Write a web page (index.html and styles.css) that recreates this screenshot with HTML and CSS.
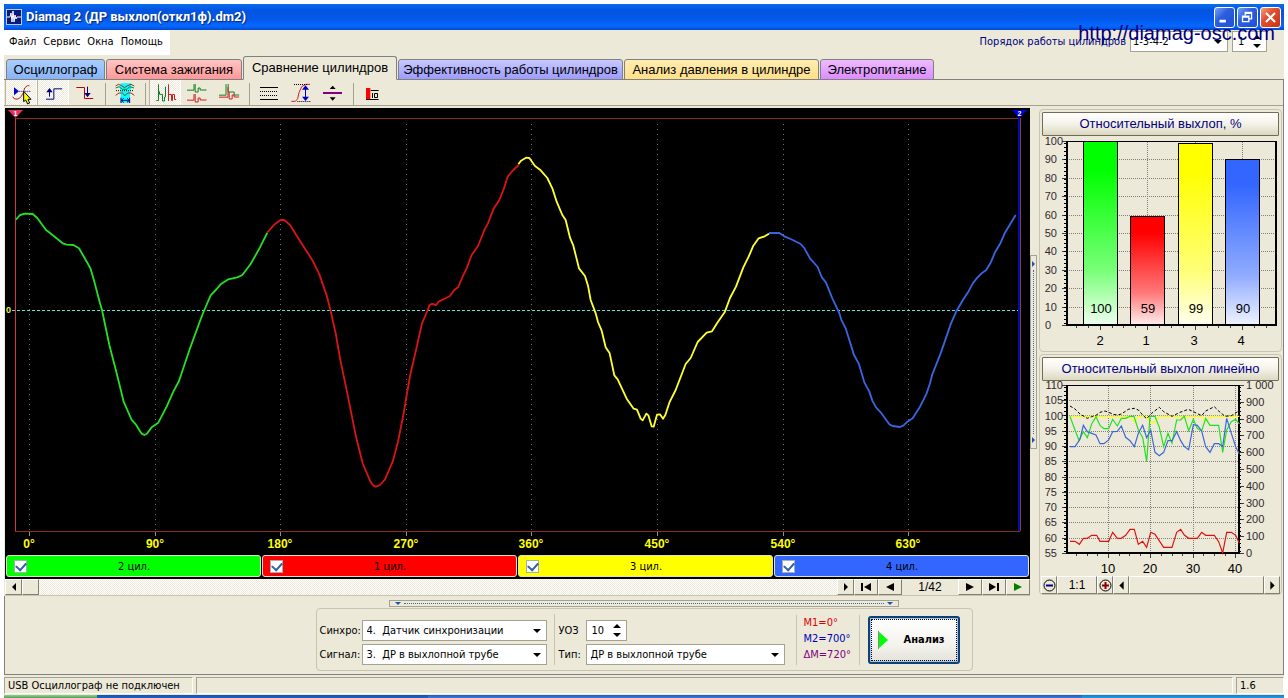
FILE: index.html
```
<!DOCTYPE html>
<html lang="ru">
<head>
<meta charset="utf-8">
<title>Diamag 2</title>
<link rel="stylesheet" href="styles.css">
</head>
<body>
<div class="app">
  <header class="titlebar">
    <svg class="logo" viewBox="0 0 16 16" aria-hidden="true"><rect width="16" height="16" fill="#b8c8f0"/><rect x="1" y="1" width="14" height="14" fill="#0a1a78"/><path d="M1 8h3l1-4 1 9 1-11 1 11 1-7 1 4 1-2h4" fill="none" stroke="#fff"/></svg>
    <h1 class="title">Diamag 2 (ДР выхлоп(откл1ф).dm2)</h1>
    <div class="winbtns">
      <button class="winbtn" aria-label="Свернуть"><svg viewBox="0 0 21 21"><path d="M5 14.500h7" stroke="#fff" stroke-width="3"/></svg></button>
      <button class="winbtn" aria-label="Восстановить"><svg viewBox="0 0 21 21"><path d="M8 8V5h7v7h-3M8 6h7M5 9h7v6H5zM5 10h7" fill="none" stroke="#fff" stroke-width="1.500"/></svg></button>
      <button class="winbtn close" aria-label="Закрыть"><svg viewBox="0 0 21 21"><path d="M5.500 5.500l10 10M15.500 5.500l-10 10" stroke="#fff" stroke-width="2.300"/></svg></button>
    </div>
  </header>

  <div class="menurow">
    <nav class="menu"><a href="#">Файл</a><a href="#">Сервис</a><a href="#">Окна</a><a href="#">Помощь</a></nav>
    <div class="order">
      <label for="order">Порядок работы цилиндров</label>
      <span class="combo order-combo"><select id="order"><option>1-3-4-2</option></select></span>
      <span class="spin order-spin"><input type="text" value="1" aria-label="Первый цилиндр"><svg viewBox="0 0 8 13"><path d="M0 4l4-4 4 4zM0 9l4 4 4-4z"/></svg></span>
    </div>
    <div class="watermark">http://diamag-osc.com</div>
  </div>

  <div class="tabs">
    <button class="tab osc">Осциллограф</button>
    <button class="tab ign">Система зажигания</button>
    <button class="tab cmp">Сравнение цилиндров</button>
    <button class="tab eff">Эффективность работы цилиндров</button>
    <button class="tab prs">Анализ давления в цилиндре</button>
    <button class="tab pwr">Электропитание</button>
  </div>

  <div class="toolbar">
    <button class="tool on" aria-label="Курсор"><svg viewBox="15 240 96 75"><path d="M42 262l15 12-15 12z" fill="#0000d0"/><path d="M58 274h36" stroke="#000080" stroke-width="3" stroke-dasharray="3 3"/><path d="M38 290l6 7h10l8-5 8-14 4-14 8-7h6" fill="none" stroke="#c02020" stroke-width="3"/><path d="M71 274v31l6-5 6 12 6-3-5-11h9z" fill="#ff0" stroke="#000" stroke-width="3"/></svg></button>
    <button class="tool on" aria-label="Передний фронт"><svg viewBox="111 240 96 75"><path d="M138 297.500h23.500v-31h25M148.500 290v-20" fill="none" stroke="#000080" stroke-width="3"/><path d="M139 277l9.500-13 9.500 13z" fill="#000080"/></svg></button>
    <button class="tool" aria-label="Задний фронт"><svg viewBox="207 240 96 75"><path d="M229 262.500h24.500v33h26" fill="none" stroke="#c00000" stroke-width="3"/><path d="M262.500 260v25" stroke="#000080" stroke-width="3"/><path d="M253 279l9.500 13 9.500-13z" fill="#000080"/></svg></button>
    <span class="sep"></span>
    <button class="tool" aria-label="Окно"><svg viewBox="327 240 96 75"><path d="M362 250h32v14l-4 14v30h-28v-30l-2-14z" fill="#0ff"/><path d="M347 258l8-5 10 4 8 6 10-6 10-4 10 5M347 286l10-7h10l8 8 8-8h10l10 7" fill="none" stroke="#a03020" stroke-width="3"/><path d="M347 264l10-4 10 8h14l8-8 13 4" fill="none" stroke="#008040" stroke-width="3"/><path d="M348 272h52" stroke="#000" stroke-width="3" stroke-dasharray="3 3"/><path d="M364 301h24M363 293v16M389 293v16M371 295l-7 6 7 6M381 295l7 6-7 6" fill="none" stroke="#000080" stroke-width="3"/></svg></button>
    <span class="sep"></span>
    <button class="tool on" aria-label="Рядом"><svg viewBox="447 240 96 75"><g fill="none" stroke-width="3"><path d="M469 301.500h6.500V253M478.500 274v9h9v20h6v-12h3v-31" stroke="#108020"/><path d="M505.500 253v50M505.500 283.500h9v18h3v-18h6v15h5" stroke="#d02020"/></g></svg></button>
    <button class="tool" aria-label="Друг под другом"><svg viewBox="543 240 96 75"><g fill="none" stroke-width="3"><path d="M561 270.500h21v-18M585.500 252v24h9v-12h6v6h19" stroke="#108020"/><path d="M561 300.500h21v-18M585.500 282v24h9v-12h6v6h19" stroke="#d02020"/></g></svg></button>
    <button class="tool" aria-label="Наложение"><svg viewBox="639 240 96 75"><g fill="none" stroke-width="3"><path d="M657 285.500h21v-33M684.500 252v24h18v9h15" stroke="#108020"/><path d="M657 291.500h27v-30M687.500 276v21h9v-12h6v6h15" stroke="#d02020"/></g></svg></button>
    <span class="sep"></span>
    <button class="tool" aria-label="Уровни"><svg viewBox="759 240 96 75"><path d="M780 262.500h54M780 298.500h54" stroke="#000" stroke-width="3"/><path d="M780 274.500h54M780 286.500h54" stroke="#000" stroke-width="3" stroke-dasharray="3 3"/></svg></button>
    <button class="tool" aria-label="Размах"><svg viewBox="855 240 96 75"><path d="M874 304h12l7-8 4-18 8-18 12-7h13" fill="none" stroke="#d02020" stroke-width="3"/><path d="M882 253.500h42M892 304.500h42" stroke="#000" stroke-width="3" stroke-dasharray="3 3"/><path d="M916.500 260v38" stroke="#0000d0" stroke-width="3"/><path d="M906 269l10.500-13 10.500 13zM906 290l10.500 13 10.500-13z" fill="#0000d0"/></svg></button>
    <button class="tool" aria-label="Центр"><svg viewBox="951 240 96 75"><path d="M969 279h57" stroke="#800080" stroke-width="6"/><path d="M989 267l9-10 9 10zM989 292l9 10 9-10z"/></svg></button>
    <span class="sep"></span>
    <button class="tool" aria-label="Диаграмма"><svg viewBox="1071 240 96 75"><path d="M1098 264h13v33h-13z" fill="#f00"/><path d="M1098 298.500h38M1112 271.500h24M1117.500 279v15M1123.500 280.500h9v12h-9z" fill="none" stroke="#000" stroke-width="3"/></svg></button>
  </div>

  <main class="main">
    <section class="left">
      <div class="scope">
        <svg class="wave" viewBox="5 108 1025 447" role="img" aria-label="Сравнение цилиндров">
          <path d="M29.500 124V531M155.500 124V531M280.500 124V531M406.500 124V531M531.500 124V531M657.500 124V531M783.500 124V531M908.500 124V531" stroke="#707070" stroke-dasharray="1 4"/>
          <path d="M15 118.500H1020M15 531.500H1020" stroke="#8a3018"/>
          <path d="M29.500 532v4M155.500 532v4M280.500 532v4M406.500 532v4M531.500 532v4M657.500 532v4M783.500 532v4M908.500 532v4" stroke="#909090"/>
          <path d="M15.500 118V531" stroke="#d03848"/>
          <path d="M1019 112V531" stroke="#0808b0" stroke-width="2"/><path d="M1020.500 118V531" stroke="#804048"/>
          <path d="M12 310.500H1018" stroke="#60e0e0" stroke-dasharray="3 2"/>
          <path d="M8 110h15l-7.500 8z" fill="#e83060"/><path d="M1012 110h15l-7.500 8z" fill="#0000e0"/>
          <g class="marks"><text x="15.500" y="116">1</text><text x="1019.500" y="116">2</text></g>
          <text class="zero" x="6" y="313">0</text>
          <g fill="none" stroke-width="5.500" stroke-linejoin="round">
            <g transform="translate(0 190) scale(.33333)"><polyline stroke="#22e022" points="48,89 60,75 75,71 98,72 112,84 138,120 150,129 190,161 200,164 220,165 237,175 262,218 272,237 283,275 300,340 306,360 328,465 350,550 371,635 395,690 408,704 425,731 433,735 440,732 455,712 475,698 500,650 520,605 537,573 570,475 600,393 613,360 632,316 650,297 662,283 685,268 712,262 727,255 752,222 780,172 802,128"/></g>
            <g transform="translate(250 140) scale(.33333)"><polyline stroke="#d81414" points="52,277 75,252 92,240 103,240 120,255 150,303 188,362 208,403 230,466 243,517 258,585 270,655 292,760 318,890 338,970 360,1022 370,1037 378,1040 390,1035 405,1018 428,965 443,910 460,825 480,708 500,622 516,550 532,513 538,496 546,491 558,496 566,485 600,468 612,451 624,442 640,405 650,385 665,345 684,318 704,268 714,250 730,208 748,180 762,145 773,110 790,90 806,75"/></g>
            <g transform="translate(510 140) scale(.33333)"><polyline stroke="#ffff30" points="25,73 33,62 48,53 58,54 75,78 90,89 112,114 127,145 140,185 157,225 167,240 180,293 190,317 207,385 225,408 234,437 242,480 257,520 264,546 275,572 287,622 299,640 313,706 323,718 350,776 371,806 381,809 392,836 398,841 409,821 415,826 425,859 431,860 441,824 450,823 459,836 466,825 478,788 497,750 527,672 542,654 563,606 590,578 606,574 624,545 644,517 660,474 678,440 700,382 716,350 730,317 746,295 764,289 777,281"/></g>
            <g transform="translate(740 190) scale(.33333)"><polyline stroke="#3866e0" points="87,129 118,129 135,140 152,147 182,162 192,173 210,205 233,231 245,261 258,278 277,325 297,367 305,392 317,415 342,495 356,520 373,577 388,605 397,632 408,652 422,667 448,703 458,708 480,711 490,707 500,697 518,685 540,650 560,610 570,580 577,553 602,490 633,400 650,362 670,328 685,305 700,278 712,263 726,249 738,241 752,218 766,185 782,158 795,128 827,75"/></g>
          </g>
          <g class="deg"><text x="29" y="548">0°</text><text x="155" y="548">90°</text><text x="280" y="548">180°</text><text x="406" y="548">270°</text><text x="531" y="548">360°</text><text x="657" y="548">450°</text><text x="783" y="548">540°</text><text x="908" y="548">630°</text></g>
        </svg>
        <div class="cyls">
          <label class="cyl c2"><input type="checkbox" checked><span>2 цил.</span></label>
          <label class="cyl c1"><input type="checkbox" checked><span>1 цил.</span></label>
          <label class="cyl c3"><input type="checkbox" checked><span>3 цил.</span></label>
          <label class="cyl c4"><input type="checkbox" checked><span>4 цил.</span></label>
        </div>
      </div>
      <div class="scroll">
        <button class="sbtn" aria-label="Влево"><svg viewBox="0 0 12 12"><path d="M8 2v8L4 6z"/></svg></button>
        <span class="thumb"></span><span class="track"></span>
        <button class="sbtn" aria-label="Вправо"><svg viewBox="0 0 12 12"><path d="M4 2v8l4-4z"/></svg></button>
        <button class="nav" aria-label="Первый"><svg viewBox="0 0 12 12"><path d="M1 2h2v8H1zM11 2v8L4 6z"/></svg></button>
        <button class="nav" aria-label="Предыдущий"><svg viewBox="0 0 12 12"><path d="M10 2v8L2 6z"/></svg></button>
        <output class="page">1/42</output>
        <button class="nav" aria-label="Следующий"><svg viewBox="0 0 12 12"><path d="M2 2v8l8-4z"/></svg></button>
        <button class="nav" aria-label="Последний"><svg viewBox="0 0 12 12"><path d="M9 2h2v8H9zM1 2v8l7-4z"/></svg></button>
        <button class="nav play" aria-label="Пуск"><svg viewBox="0 0 12 12"><path d="M2 2v8l8-4z"/></svg></button>
      </div>
    </section>

    <div class="vsplit"><button class="vgrip" aria-label="Свернуть панель"><i></i><b></b><i></i></button></div>

    <aside class="right">
      <section class="panel">
        <button class="head">Относительный выхлоп, %</button>
        <svg class="chart" viewBox="1040 136 241 215" role="img" aria-label="Относительный выхлоп, %">
          <defs>
            <linearGradient id="g2" x2="0" y2="1"><stop stop-color="#0f0"/><stop offset=".15" stop-color="#0f0"/><stop offset=".7" stop-color="#78ff78"/><stop offset="1" stop-color="#f0fff0"/></linearGradient>
            <linearGradient id="g1" x2="0" y2="1"><stop stop-color="#f00"/><stop offset=".15" stop-color="#f00"/><stop offset=".7" stop-color="#ff7878"/><stop offset="1" stop-color="#fff0f0"/></linearGradient>
            <linearGradient id="g3" x2="0" y2="1"><stop stop-color="#ff0"/><stop offset=".15" stop-color="#ff0"/><stop offset=".7" stop-color="#ffff78"/><stop offset="1" stop-color="#fffff0"/></linearGradient>
            <linearGradient id="g4" x2="0" y2="1"><stop stop-color="#3366ff"/><stop offset=".15" stop-color="#3366ff"/><stop offset=".7" stop-color="#90acff"/><stop offset="1" stop-color="#f0f4ff"/></linearGradient>
          </defs>
          <path class="grid" d="M1067 159.500h209M1067 178.500h209M1067 196.500h209M1067 215.500h209M1067 233.500h209M1067 251.500h209M1067 270.500h209M1067 288.500h209M1067 307.500h209M1100.500 142v183M1147.500 142v183M1195.500 142v183M1242.500 142v183"/>
          <path class="tick" d="M1062 141.500h5M1062 159.500h5M1062 178.500h5M1062 196.500h5M1062 215.500h5M1062 233.500h5M1062 251.500h5M1062 270.500h5M1062 288.500h5M1062 307.500h5M1062 325.500h5M1100.500 326v4M1147.500 326v4M1195.500 326v4M1242.500 326v4M1076.500 326v2M1088.500 326v2M1112.500 326v2M1123.500 326v2M1135.500 326v2M1159.500 326v2M1171.500 326v2M1183.500 326v2M1207.500 326v2M1218.500 326v2M1230.500 326v2M1254.500 326v2M1266.500 326v2"/>
          <path d="M1065 143v182" stroke="#000" stroke-dasharray="1 3" stroke-width="2"/>
          <g stroke="#000"><rect x="1083.500" y="141.500" width="34" height="184" fill="url(#g2)"/><rect x="1130.500" y="216.500" width="34" height="109" fill="url(#g1)"/><rect x="1178.500" y="143.500" width="34" height="182" fill="url(#g3)"/><rect x="1225.500" y="159.500" width="34" height="166" fill="url(#g4)"/></g>
          <path d="M1066 141.500h211" stroke="#000"/><path d="M1067 141v184h209V141" fill="none" stroke="#000" stroke-width="2"/>
          <g class="yl"><text x="1063" y="145">100</text><text x="1057" y="163">90</text><text x="1057" y="182">80</text><text x="1057" y="200">70</text><text x="1057" y="219">60</text><text x="1057" y="237">50</text><text x="1057" y="255">40</text><text x="1057" y="274">30</text><text x="1057" y="292">20</text><text x="1057" y="311">10</text><text x="1051" y="329">0</text></g>
          <g class="xl"><text x="1101" y="313">100</text><text x="1148" y="313">59</text><text x="1196" y="313">99</text><text x="1243" y="313">90</text><text x="1100" y="345">2</text><text x="1146" y="345">1</text><text x="1194" y="345">3</text><text x="1241" y="345">4</text></g>
        </svg>
      </section>

      <section class="panel">
        <button class="head">Относительный выхлоп линейно</button>
        <svg class="chart" viewBox="1040 381 241 195" role="img" aria-label="Относительный выхлоп линейно">
          <path class="grid" d="M1067 400.500h172M1067 415.500h172M1067 431.500h172M1067 446.500h172M1067 461.500h172M1067 477.500h172M1067 492.500h172M1067 507.500h172M1067 522.500h172M1067 538.500h172M1108.500 386v167M1150.500 386v167M1193.500 386v167M1235.500 386v167"/>
          <path class="tick" d="M1062 385.500h5M1062 400.500h5M1062 415.500h5M1062 431.500h5M1062 446.500h5M1062 461.500h5M1062 477.500h5M1062 492.500h5M1062 507.500h5M1062 522.500h5M1062 538.500h5M1062 553.500h5M1239 385.500h5M1239 402.500h5M1239 419.500h5M1239 435.500h5M1239 452.500h5M1239 469.500h5M1239 486.500h5M1239 503.500h5M1239 519.500h5M1239 536.500h5M1239 553.500h5M1108.500 554v4M1150.500 554v4M1193.500 554v4M1235.500 554v4M1076.500 554v2M1087.500 554v2M1097.500 554v2M1119.500 554v2M1129.500 554v2M1140.500 554v2M1161.500 554v2M1172.500 554v2M1182.500 554v2M1203.500 554v2M1214.500 554v2M1225.500 554v2"/>
          <path d="M1065 387v166M1240 387v166" stroke="#000" stroke-dasharray="1 3" stroke-width="2"/>
          <path d="M1066 385.500h173" stroke="#000"/><path d="M1067 385v168h172V385" fill="none" stroke="#000" stroke-width="2"/>
          <g transform="translate(1030 350) scale(.33333)" fill="none" stroke-width="3.500">
            <polyline stroke="#ff0" points="120,199 300,199 313,215 325,199 350,199 362,217 375,217 388,199 515,199 527,215 540,199 628,199"/>
            <polyline stroke="#1ee01e" points="120,199 135,240 147,271 160,245 172,263 185,222 198,200 210,226 222,236 236,236 248,208 262,228 274,205 287,205 300,199 312,199 325,240 338,262 350,335 360,199 375,199 388,232 401,290 414,250 426,280 440,210 452,210 463,199 476,242 490,208 502,236 515,243 527,205 540,226 553,226 566,226 578,307 590,240 604,215 617,208 628,222"/>
            <polyline stroke="#3a66d8" points="120,290 135,290 150,268 160,226 172,245 185,250 198,255 210,281 222,281 236,270 248,245 262,244 274,228 287,262 300,272 313,290 325,250 338,226 350,263 362,240 375,307 388,317 401,307 414,272 426,272 440,245 452,272 463,290 476,299 490,224 502,226 515,243 527,290 540,307 553,281 566,281 578,290 590,205 604,250 617,290 628,312"/>
            <polyline stroke="#e01010" points="120,574 135,574 148,583 160,565 172,565 185,556 200,556 210,574 236,574 248,547 262,565 274,565 287,556 300,538 313,538 325,583 338,574 350,592 362,547 375,553 401,592 426,592 440,547 452,538 463,555 476,565 502,565 515,547 527,556 553,556 566,575 578,609 590,547 604,547 617,556 628,580"/>
            <polyline stroke="#000" stroke-width="3" stroke-dasharray="9 6" points="120,168 135,177 150,192 172,205 185,200 198,196 210,187 225,183 236,187 250,193 262,195 274,192 295,178 313,175 325,180 338,195 350,206 365,190 388,172 401,185 426,199 450,187 475,178 490,185 515,197 527,183 553,170 566,183 585,199 604,197 628,182"/>
          </g>
          <g class="yl"><text x="1063" y="389">110</text><text x="1063" y="404">105</text><text x="1063" y="420">100</text><text x="1057" y="435">95</text><text x="1057" y="450">90</text><text x="1057" y="465">85</text><text x="1057" y="481">80</text><text x="1057" y="496">75</text><text x="1057" y="511">70</text><text x="1057" y="526">65</text><text x="1057" y="542">60</text><text x="1057" y="557">55</text></g>
          <g class="yr"><text x="1246" y="389">1 000</text><text x="1246" y="406">900</text><text x="1246" y="423">800</text><text x="1246" y="439">700</text><text x="1246" y="456">600</text><text x="1246" y="473">500</text><text x="1246" y="490">400</text><text x="1246" y="507">300</text><text x="1246" y="523">200</text><text x="1246" y="540">100</text><text x="1246" y="557">0</text></g>
          <g class="xl"><text x="1108" y="573">10</text><text x="1150" y="573">20</text><text x="1193" y="573">30</text><text x="1235" y="573">40</text></g>
        </svg>
        <div class="zoombar">
          <button class="zbtn" aria-label="Уменьшить"><svg viewBox="0 0 13 13"><circle cx="6.500" cy="6.500" r="5.500" fill="none" stroke="#000"/><path d="M3 6.500h7" stroke="#000080" stroke-width="2"/></svg></button>
          <output class="ratio">1:1</output>
          <button class="zbtn" aria-label="Увеличить"><svg viewBox="0 0 13 13"><circle cx="6.500" cy="6.500" r="5.500" fill="none" stroke="#000"/><path d="M3 6.500h7M6.500 3v7" stroke="#900000" stroke-width="2"/></svg></button>
          <button class="zbtn" aria-label="Влево"><svg viewBox="0 0 12 12"><path d="M8 2v8L4 6z"/></svg></button>
          <span class="zthumb"></span>
          <button class="zbtn" aria-label="Вправо"><svg viewBox="0 0 12 12"><path d="M4 2v8l4-4z"/></svg></button>
        </div>
      </section>
    </aside>
  </main>

  <div class="bottom">
    <button class="hgrip" aria-label="Свернуть параметры"><i></i><b></b><i></i></button>
    <form class="params">
      <div class="fields">
        <label for="sync">Синхро:</label>
        <span class="combo"><select id="sync"><option>4.&nbsp; Датчик синхронизации</option></select></span>
        <label for="signal">Сигнал:</label>
        <span class="combo"><select id="signal"><option>3.&nbsp; ДР в выхлопной трубе</option></select></span>
      </div>
      <div class="fields second">
        <label for="uoz">УОЗ</label>
        <span class="spin"><input id="uoz" type="text" value="10"><svg viewBox="0 0 8 13"><path d="M0 4l4-4 4 4zM0 9l4 4 4-4z"/></svg></span>
        <label for="kind">Тип:</label>
        <span class="combo"><select id="kind"><option>ДР в выхлопной трубе</option></select></span>
      </div>
      <div class="markers"><span class="m1">M1=0°</span><span class="m2">M2=700°</span><span class="dm">ΔM=720°</span></div>
      <button class="analyze" type="button"><svg viewBox="0 0 10 18"><path d="M0 0l10 9-10 9z" fill="#0f0"/><path d="M.5 0v18" stroke="#888"/></svg><span>Анализ</span></button>
    </form>
  </div>

  <footer class="status"><span class="usb">USB Осциллограф не подключен</span><span class="mid"></span><span class="ver">1.6</span></footer>
</div>
<div class="taskbar"><span class="start"></span><span class="task"></span><span class="rest"></span><span class="tray"></span></div>
</body>
</html>
```
FILE: styles.css
```
* { box-sizing: border-box; }
body {
  margin: 0;
  padding: 4px 4px 0;
  min-height: 100vh;
  display: flex;
  flex-direction: column;
  background: #fff;
  color: #000;
  font: 11px/14px "DejaVu Sans Condensed", "DejaVu Sans", sans-serif;
}
button, input, select { font: inherit; color: inherit; margin: 0; padding: 0; border: 0; background: none; border-radius: 0; }
svg { display: block; }
.app { flex: 1; display: flex; flex-direction: column; background: #ece9d8; position: relative; }

.titlebar {
  height: 26px; display: flex; align-items: center; gap: 4px; padding: 0 3px 0 2px;
  background: linear-gradient(#0a6cf0, #0354e0 25%, #0458ea 55%, #0668ff 85%, #0348d0);
}
.logo { width: 16px; height: 16px; }
.title { flex: 1; margin: 0; color: #fff; font: bold 13px/20px Roboto, sans-serif; text-shadow: 1px 1px 1px #04247a; white-space: nowrap; }
.winbtns { display: flex; gap: 2px; }
.winbtn { width: 21px; height: 21px; border: 1px solid #fff; border-radius: 3px; background: linear-gradient(135deg, #7aa4f4, #2c5ede 40%, #2050d8); }
.winbtn.close { background: linear-gradient(135deg, #f0a080, #e05030 40%, #c83410); }

.menurow { height: 25px; display: flex; justify-content: space-between; position: relative; }
.menu { width: 166px; display: flex; gap: 7px; padding: 5px 5px 0; background: #fff; }
.menu a { color: #000; text-decoration: none; }
.order { display: flex; gap: 4px; align-items: flex-start; padding: 1px 17px 0 0; color: #000080; }
.order label { padding-top: 4px; }
.watermark { position: absolute; right: 9px; top: -9px; font: 20px/24px "Liberation Sans", Arial, sans-serif; color: #000080; pointer-events: none; }

.combo { position: relative; display: flex; height: 21px; }
.combo select { appearance: none; flex: 1; width: 100%; height: 21px; padding: 0 4px; background: #fff; border: 1px solid #a5a294; color: #000; }
.combo::after { content: ""; position: absolute; right: 6px; top: 9px; border: 4px solid transparent; border-top-color: #000; border-bottom: 0; pointer-events: none; }
.spin { display: flex; align-items: center; height: 21px; padding: 0 5px; background: #fff; border: 1px solid #a5a294; color: #000; }
.spin input { flex: 1; min-width: 0; }
.spin svg { width: 8px; height: 13px; }
.order-combo { width: 98px; }
.order-combo select { padding: 0 2px; }
.order-spin { width: 35px; }

.tabs { height: 25px; display: flex; align-items: flex-end; gap: 1px; padding: 0 0 0 2px; background: linear-gradient(#808080, #808080) bottom / 100% 1px no-repeat; }
.tab { height: 21px; padding: 0 3px; border: 1px solid #808080; border-radius: 3px 3px 0 0; font: 13px/18px "Liberation Sans", Arial, sans-serif; white-space: nowrap; text-align: center; }
.osc { width: 99px; background: linear-gradient(#a8ceff, #88b4f8); }
.ign { width: 136px; background: linear-gradient(#ffc4c4, #ff9898); }
.cmp { width: 154px; height: 24px; background: #ece9d8; border-bottom-color: #ece9d8; }
.eff { width: 225px; background: linear-gradient(#c8c8ff, #9c9cff); }
.prs { width: 195px; background: linear-gradient(#ffecb0, #ffe088); }
.pwr { width: 114px; background: linear-gradient(#ecbcff, #dc8cff); }

.toolbar { height: 28px; padding: 0 1px; display: flex; align-items: flex-start; border-right: 1px solid #808080; background: linear-gradient(#a5a294, #a5a294) 0 25px / 100% 1px no-repeat; }
.tool { width: 32px; height: 25px; }
.tool svg { width: 32px; height: 25px; }
.tool.on { background: repeating-conic-gradient(#fff 0 25%, #ece9d8 0 50%) 0 0 / 2px 2px; box-shadow: inset -1px 0 #fff, inset 1px 0 #b8b4a0; }
.sep { width: 8px; height: 25px; background: linear-gradient(#a5a294, #a5a294) 4px 3px / 1px 22px no-repeat; }

.main { flex: 1; display: flex; padding-left: 1px; border-right: 1px solid #808080; }
.left { flex: 1; min-width: 0; display: flex; flex-direction: column; }
.scope { flex: 1; background: #000; display: flex; flex-direction: column; }
.wave { flex: 1; width: 100%; }
.marks text { fill: #fff; font: bold 7px "Liberation Sans", Arial, sans-serif; text-anchor: middle; }
.zero { fill: #f0f040; font: bold 9px "Liberation Sans", sans-serif; }
.deg text { fill: #ff0; font: bold 12px "Liberation Sans", Arial, sans-serif; text-anchor: middle; }
.cyls { display: flex; gap: 1px; padding: 0 1px 2px; }
.cyl { flex: 1; height: 22px; display: flex; align-items: center; padding: 0 7px; border: 1px solid #e0e0c8; border-radius: 3px; }
.cyl span { flex: 1; text-align: center; padding: 1px 12px 0 0; }
.cyl input { appearance: none; width: 13px; height: 13px; border: 1px solid #a0b0b0; background: #fff; display: grid; place-items: center; }
.cyl input:checked::before { content: ""; width: 8px; height: 5px; border: solid #3060a8; border-width: 0 0 2px 2px; transform: rotate(-48deg); margin-bottom: 2px; }
.c2 { background: #0f0; } .c1 { background: #f00; } .c3 { background: #ff0; } .c4 { background: #3366ff; }

.scroll { height: 17px; display: flex; border-bottom: 1px solid #c8c4b4; }
.sbtn, .nav, .thumb, .zbtn, .zthumb, .ratio { border: 1px solid; border-color: #fff #808070 #808070 #fff; background: #ece9d8; display: grid; place-items: center; }
.sbtn, .thumb { width: 17px; }
.sbtn svg, .nav svg { width: 12px; height: 12px; }
.track { flex: 1; background: repeating-conic-gradient(#fff 0 25%, #ece9d8 0 50%) 0 0 / 2px 2px; }
.nav { width: 24px; }
.page { width: 56px; text-align: center; font: 12px/16px "Liberation Sans", Arial, sans-serif; }
.play { fill: #008000; }

.vsplit { width: 8px; display: flex; align-items: center; }
.vgrip { width: 7px; height: 194px; display: flex; flex-direction: column; align-items: center; padding: 5px 0; border: 1px solid #a5a294; }
.vgrip i { border: 3px solid transparent; border-left-color: #2050b0; border-right: 0; }
.vgrip b { flex: 1; margin: 3px 0; border-left: 1px dotted #4068a8; }

.right { width: 245px; padding: 1px; display: flex; flex-direction: column; gap: 2px; }
.panel { border: 1px solid #c8c4b4; border-radius: 4px; padding-top: 2px; }
.head { display: block; width: calc(100% - 4px); height: 24px; margin: 0 2px; border: 1px solid #706c58; border-radius: 1px; background: linear-gradient(#fff, #f4f2e8 50%, #dcd8c0); color: #000080; font: 13px/20px "Liberation Sans", Arial, sans-serif; }
.chart { width: 100%; }
.grid { stroke: #808080; stroke-dasharray: 1 1; fill: none; }
.tick { stroke: #404040; fill: none; }
.yl text { font: 11px "Liberation Sans", Arial, sans-serif; text-anchor: end; fill: #302830; }
.yr text { font: 11px "Liberation Sans", Arial, sans-serif; fill: #302830; }
.xl text { font: 13px "Liberation Sans", Arial, sans-serif; text-anchor: middle; }
.zoombar { display: flex; height: 18px; padding: 0 1px; }
.zbtn { width: 16px; }
.zbtn svg { width: 13px; height: 13px; }
.ratio { width: 40px; font: 12px/14px "Liberation Sans", Arial, sans-serif; }
.zthumb { flex: 1; }

.bottom { display: flex; flex-direction: column; align-items: center; gap: 1px; padding: 4px 0 3px; border: 1px solid #808080; border-top: 0; }
.hgrip { width: 510px; height: 7px; display: flex; align-items: center; padding: 0 5px; border: 1px solid #a5a294; }
.hgrip i { border: 3px solid transparent; border-top-color: #2050b0; border-bottom: 0; }
.hgrip b { flex: 1; margin: 0 3px; border-top: 1px dotted #4068a8; }
.params { display: flex; align-items: center; height: 63px; width: 657px; padding: 0 12px 0 3px; border: 1px solid #c8c4b4; border-radius: 4px; }
.fields { display: grid; grid-template-columns: 42px 185px; gap: 3px 0; align-items: center; padding-top: 6px; }
.second { grid-template-columns: 27px 199px; margin-left: 7px; padding-left: 4px; border-left: 1px solid #c8c4b4; }
.second .spin { width: 41px; }
.markers { display: flex; flex-direction: column; gap: 2px; width: 64px; height: 50px; margin-left: 11px; padding: 1px 0 0 7px; border: solid #c8c4b4; border-width: 0 1px; }
.m1 { color: #e00000; } .m2 { color: #0000c0; } .dm { color: #800080; }
.analyze { display: flex; align-items: center; gap: 16px; width: 92px; height: 48px; margin-left: auto; padding: 0 8px; background: linear-gradient(#fff, #f4f3ee 60%, #e4e2d8); border: 2px solid #104078; border-radius: 3px; box-shadow: inset 0 0 0 1px #a8c4f0; outline: 1px dotted #000; outline-offset: -4px; font-weight: bold; }
.analyze svg { width: 10px; height: 18px; }

.status { display: flex; gap: 3px; height: 20px; padding-top: 2px; }
.status span { height: 17px; border: 1px solid; border-color: #a5a294 #fff #fff #a5a294; padding-left: 3px; line-height: 15px; }
.usb { width: 189px; } .mid { flex: 1; } .ver { width: 48px; }
.taskbar { height: 4px; display: flex; }
.start { width: 93px; background: linear-gradient(#90d090, #3c9040); }
.task { width: 331px; background: linear-gradient(#1850b0, #2468d0); }
.rest { flex: 1; background: linear-gradient(#2458c0, #3c8cf0); }
.tray { width: 202px; background: linear-gradient(#1878d0, #28a8f0); }
```
